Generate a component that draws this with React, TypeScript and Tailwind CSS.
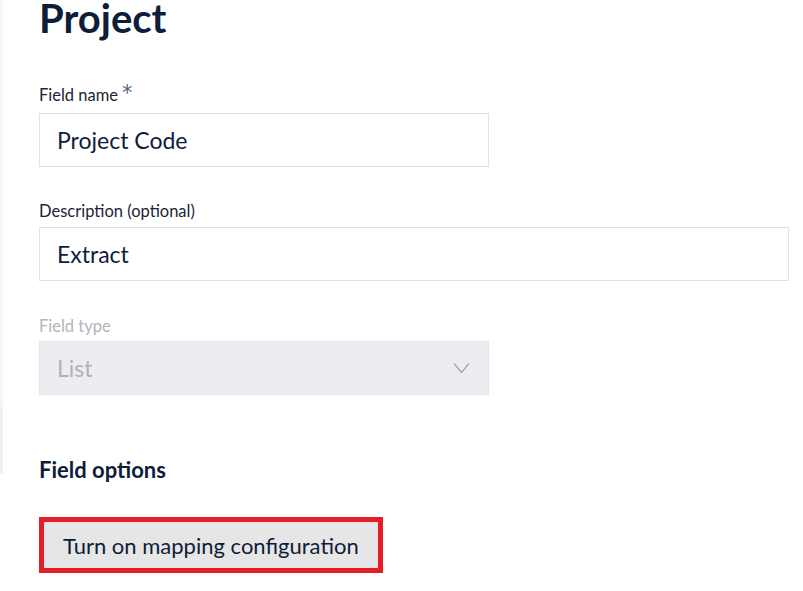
import React from "react";

export default function App() {
  return (
    <div className="flex min-h-[591px] w-[803px] bg-white" style={{ fontFamily: "Lato, 'Noto Sans', sans-serif" }}>
      <div className="flex w-[3px] flex-col">
        <div className="h-[407px] bg-[#f7f7f9]" />
        <div className="h-[67px] bg-[#eeeff3]" />
      </div>
      <div className="flex flex-1 flex-col pl-[36px] pr-[14px]">
        <h1 className="h-[36px] text-[40px] font-bold leading-[36px] text-[#0e1d3a]">Project</h1>

        <label className="mt-[49px] flex h-[20px] items-start text-[16.5px] leading-[20px] text-[#1a2438]">
          Field name
          <span className="ml-[4px] mt-[-2px] text-[21px] leading-[20px] text-[#52607a]" style={{ fontFamily: "'DejaVu Sans', sans-serif" }}>*</span>
        </label>
        <div className="mt-[8px] flex h-[54px] w-[450px] items-center border border-[#e1e2e8] bg-white pl-[17px] text-[23px] text-[#0e1d3a]">
          Project Code
        </div>

        <label className="mt-[34px] h-[20px] text-[16.5px] leading-[20px] text-[#1a2438]">Description (optional)</label>
        <div className="mt-[6px] flex h-[54px] w-full items-center border border-[#e1e2e8] bg-white pl-[17px] text-[23px] text-[#0e1d3a]">
          Extract
        </div>

        <label className="mt-[35px] h-[20px] text-[16.5px] leading-[20px] text-[#b3b4ba]">Field type</label>
        <div className="mt-[5px] flex h-[54px] w-[450px] items-center justify-between border border-[#e4e5ea] bg-[#ecedf1] pl-[17px] pr-[18px] text-[23px] text-[#b1b1b6]">
          <span>List</span>
          <svg width="17" height="12" viewBox="0 0 17 12" fill="none">
            <path d="M1 1.5L8.5 10.5L16 1.5" stroke="#a3a4ab" strokeWidth="1.2" />
          </svg>
        </div>

        <h2 className="mt-[62px] h-[26px] text-[22px] font-bold leading-[26px] text-[#0e1d3a]">Field options</h2>

        <div className="mt-[34px] self-start border-[5px] border-[#e31e25]">
          <button className="flex h-[46px] items-center bg-[#e6e6e6] px-[19px] text-[22px] text-[#0e1d3a]">
            Turn on mapping configuration
          </button>
        </div>
      </div>
    </div>
  );
}
